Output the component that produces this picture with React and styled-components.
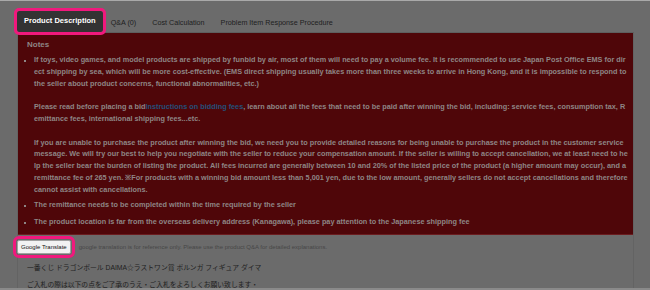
import React from 'react'
import styled, { createGlobalStyle } from 'styled-components'

const GlobalStyle = createGlobalStyle`
  html, body {
    margin: 0;
    padding: 0;
    background: #6b6b6b;
  }
  body {
    font-family: "Liberation Sans", Arial, sans-serif;
  }
`

const Page = styled.div`
  height: 290px;
  overflow: hidden;
  border-top: 1px solid #a9a9a9;
  box-sizing: border-box;
  display: flex;
  flex-direction: column;
`

const Main = styled.div`
  flex: 1;
  min-height: 0;
  overflow: hidden;
  padding-top: 9px;
`

const TabBar = styled.div`
  display: flex;
  align-items: flex-end;
  margin: 0 16px 0 17px;
  padding-left: 0;
  height: 22px;
  border-bottom: 1px solid #5e5e5e;
`

const Tab = styled.div`
  padding: 0 ${p => (p.$active ? '7px' : '8px')};
  height: ${p => (p.$active ? '21px' : '18px')};
  line-height: ${p => (p.$active ? '20px' : '18px')};
  font-size: ${p => (p.$active ? '7.5px' : '7.2px')};
  font-weight: ${p => (p.$active ? 'bold' : 'normal')};
  color: ${p => (p.$active ? '#ffffff' : '#1e1e1e')};
  background: ${p => (p.$active ? '#333333' : 'transparent')};
  white-space: nowrap;
  ${p => p.$active && `
    margin-left: 0;
    border-radius: 2px;
    outline: 3px solid #f0197d;
    position: relative;
    z-index: 1;
  `}
`

const Content = styled.div`
  margin: 0 16px 0 17px;
  border-left: 1px solid #636363;
  border-right: 1px solid #636363;
  padding-bottom: 20px;
`

const Notice = styled.div`
  background: #4f0609;
  border-bottom: 1px solid #6b1c1f;
  padding: 6px 5px 6px 9px;
`

const NoticeTitle = styled.div`
  font-size: 8px;
  font-weight: bold;
  color: #8e8585;
  line-height: 12px;
  margin-bottom: 3px;
`

const NoticeList = styled.ul`
  margin: 0;
  padding: 0 0 0 7px;
  list-style: square;
`

const NoticeItem = styled.li`
  font-size: 7.3px;
  font-weight: bold;
  color: #8e8585;
  line-height: 11.8px;
  word-break: break-all;
  margin-bottom: ${p => p.$gap || '3px'};
  &::marker {
    font-size: 6px;
  }
`

const Link = styled.span`
  color: #24507a;
`

const TranslateRow = styled.div`
  display: flex;
  align-items: center;
  gap: 8px;
  padding: 2px 0 0 0;
  margin-left: -1px;
`

const TranslateButton = styled.button`
  font-family: "Liberation Sans", Arial, sans-serif;
  font-size: 6px;
  color: #111;
  background: #f2f2f2;
  border: 1px solid #a0a0a0;
  border-radius: 1px;
  padding: 0 3px;
  height: 14px;
  line-height: 12px;
  margin: 3px 0 0 0;
  outline: 3px solid #f0197d;
  outline-offset: 1px;
  border-radius: 2px;
  position: relative;
  z-index: 1;
`

const Caption = styled.span`
  font-size: 6px;
  color: #474747;
  margin-top: 3px;
`

const Description = styled.div`
  padding: 5px 0 0 9px;
  font-family: "Liberation Sans", "Noto Sans CJK JP", sans-serif;
  font-size: 6.8px;
  line-height: 17px;
  color: #1e1e1e;
`

const BottomBar = styled.div`
  height: 2px;
  background: #8a8a8a;
`

export default function App() {
  return (
    <>
      <GlobalStyle />
      <Page>
        <Main>
          <TabBar>
            <Tab $active>Product Description</Tab>
            <Tab>Q&amp;A (0)</Tab>
            <Tab>Cost Calculation</Tab>
            <Tab>Problem Item Response Procedure</Tab>
          </TabBar>
          <Content>
            <Notice>
              <NoticeTitle>Notes</NoticeTitle>
              <NoticeList>
                <NoticeItem>
                  If toys, video games, and model products are shipped by funbid by air, most of them will need to pay a volume fee. It is recommended to use Japan Post Office EMS for direct shipping by sea, which will be more cost-effective. (EMS direct shipping usually takes more than three weeks to arrive in Hong Kong, and it is impossible to respond to the seller about product concerns, functional abnormalities, etc.)
                  <br /><br />
                  Please read before placing a bid<Link>Instructions on bidding fees</Link>, learn about all the fees that need to be paid after winning the bid, including: service fees, consumption tax, Remittance fees, international shipping fees...etc.
                  <br /><br />
                  If you are unable to purchase the product after winning the bid, we need you to provide detailed reasons for being unable to purchase the product in the customer service message. We will try our best to help you negotiate with the seller to reduce your compensation amount. If the seller is willing to accept cancellation, we at least need to help the seller bear the burden of listing the product. All fees incurred are generally between 10 and 20% of the listed price of the product (a higher amount may occur), and a remittance fee of 265 yen. ※For products with a winning bid amount less than 5,001 yen, due to the low amount, generally sellers do not accept cancellations and therefore cannot assist with cancellations.
                </NoticeItem>
                <NoticeItem $gap="6px">The remittance needs to be completed within the time required by the seller</NoticeItem>
                <NoticeItem $gap="0">The product location is far from the overseas delivery address (Kanagawa), please pay attention to the Japanese shipping fee</NoticeItem>
              </NoticeList>
            </Notice>
            <TranslateRow>
              <TranslateButton>Google Translate</TranslateButton>
              <Caption>google translation is for reference only. Please use the product Q&amp;A for detailed explanations.</Caption>
            </TranslateRow>
            <Description>
              一番くじ ドラゴンボール DAIMA☆ラストワン賞 ポルンガ フィギュア ダイマ
              <br />
              ご入札の際は以下の点をご了承のうえ・ご入札をよろしくお願い致します・
            </Description>
          </Content>
        </Main>
        <BottomBar />
      </Page>
    </>
  )
}
